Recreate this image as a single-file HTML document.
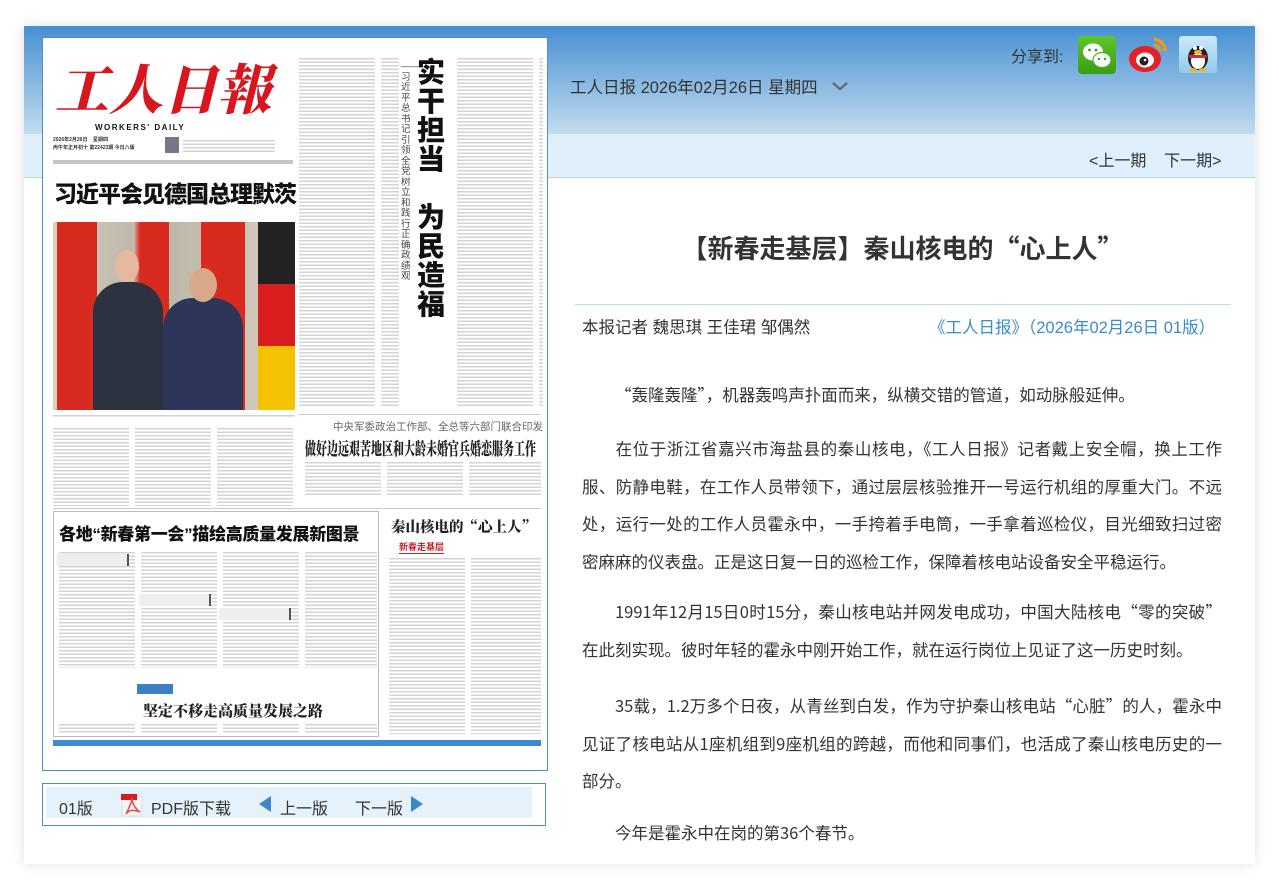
<!DOCTYPE html>
<html><head><meta charset="utf-8">
<style>
*{margin:0;padding:0;box-sizing:border-box}
body{width:1279px;height:888px;background:#fff;font-family:"Liberation Sans","Noto Sans CJK SC",sans-serif;color:#333;position:relative;overflow:hidden}
.abs{position:absolute}
#wrap{left:24px;top:26px;width:1231px;height:838px;background:#fff;box-shadow:0 0 12px rgba(0,0,0,.12)}
#hdr{left:24px;top:26px;width:1231px;height:108px;background:linear-gradient(#4690d2,#c3dcef)}
#band{left:24px;top:134px;width:1231px;height:44px;background:#dff0fc;border-bottom:1px solid #b8d4ea}
.lines{background:repeating-linear-gradient(#fff 0,#fff 2px,#d2d2d2 2px,#d2d2d2 3.5px)}
.cols{background:repeating-linear-gradient(90deg,transparent 0,transparent 76px,#fff 76px,#fff 82px),repeating-linear-gradient(#fff 0,#fff 2px,#d4d4d4 2px,#d4d4d4 3.5px)}
.art{left:582px;width:640px;font-size:16.5px;line-height:20px;color:#333;white-space:nowrap;font-family:"Noto Sans CJK SC","Liberation Sans",sans-serif}
.j{text-align:justify;text-align-last:justify}
.np{overflow:hidden}
</style></head><body>
<div class="abs" id="wrap"></div>
<div class="abs" id="hdr"></div>
<div class="abs" id="band"></div>

<div class="abs" style="left:570px;top:74px;font-size:16.5px;color:#333">工人日报 2026年02月26日 星期四</div>
<svg class="abs" style="left:831px;top:80px" width="18" height="12"><path d="M2 3 L9 9 L16 3" stroke="#666" stroke-width="2.2" fill="none"/></svg>
<div class="abs" style="left:1011px;top:43px;font-size:16px;color:#333">分享到:</div>
<div class="abs" style="left:1078px;top:36px;width:38px;height:38px;background:linear-gradient(#5cc72a,#3a9e12);border-radius:4px"></div>
<svg class="abs" style="left:1078px;top:36px" width="38" height="38"><ellipse cx="15" cy="16" rx="10" ry="8.5" fill="#fff"/><ellipse cx="24" cy="24" rx="9" ry="7.5" fill="#fff" stroke="#4bb31d" stroke-width="1.2"/><circle cx="11.5" cy="14" r="1.4" fill="#3a9e12"/><circle cx="18" cy="14" r="1.4" fill="#3a9e12"/><circle cx="21" cy="23" r="1.2" fill="#3a9e12"/><circle cx="27" cy="23" r="1.2" fill="#3a9e12"/></svg>
<svg class="abs" style="left:1127px;top:33px" width="44" height="42"><ellipse cx="18" cy="26" rx="16" ry="13" fill="#e32227"/><ellipse cx="18" cy="27" rx="9" ry="7.5" fill="#fff"/><circle cx="17" cy="28" r="4.5" fill="#222"/><circle cx="18" cy="27" r="1.3" fill="#fff"/><path d="M27 6 A12 12 0 0 1 38 18" stroke="#f19a1a" stroke-width="3.5" fill="none"/><path d="M27 12 A6 6 0 0 1 33 18" stroke="#f19a1a" stroke-width="3" fill="none"/></svg>
<div class="abs" style="left:1179px;top:36px;width:38px;height:37px;background:linear-gradient(#cde9fb,#8fcaf0);border-radius:3px"></div>
<svg class="abs" style="left:1179px;top:36px" width="38" height="37"><ellipse cx="19" cy="22" rx="10" ry="12" fill="#222"/><ellipse cx="19" cy="25" rx="7" ry="8" fill="#fff"/><circle cx="16" cy="12" r="2" fill="#fff"/><circle cx="22" cy="12" r="2" fill="#fff"/><ellipse cx="19" cy="16" rx="4" ry="2" fill="#f5b41a"/><rect x="10" y="19" width="18" height="3" fill="#e3262b"/><ellipse cx="14" cy="34" rx="4" ry="1.8" fill="#f5b41a"/><ellipse cx="24" cy="34" rx="4" ry="1.8" fill="#f5b41a"/></svg>
<div class="abs" style="left:1089px;top:147px;font-size:16px;color:#333">&lt;上一期&nbsp;&nbsp;&nbsp;&nbsp;下一期&gt;</div>

<div class="abs np" style="left:42px;top:37px;width:506px;height:734px;border:1px solid #4b8fd0;background:#fff">
 <div class="abs" style="left:12px;top:14px;font-family:'Noto Serif CJK SC',serif;font-size:54px;font-weight:900;color:#d8161d;font-style:italic;letter-spacing:0px;line-height:70px;white-space:nowrap">工人日報</div>
 <div class="abs" style="left:52px;top:85px;font-size:8px;font-weight:bold;letter-spacing:1.5px;color:#111;white-space:nowrap">WORKERS' DAILY</div>
 <div class="abs" style="left:10px;top:98px;font-size:5px;color:#333;line-height:8px;font-weight:bold;white-space:nowrap">2026年2月26日 &nbsp;&nbsp;&nbsp;星期四<br>丙午年正月初十 第22423期 今日八版</div>
 <div class="abs" style="left:122px;top:99px;width:14px;height:16px;background:#778"></div>
 <div class="abs lines" style="left:140px;top:100px;width:92px;height:14px"></div>
 <div class="abs" style="left:10px;top:122px;width:240px;height:4px;background:#c4c4c4"></div>
 <div class="abs" style="left:11px;top:142px;font-size:23px;font-weight:900;color:#111;white-space:nowrap;line-height:28px;letter-spacing:-1px">习近平会见德国总理默茨</div>
 <div class="abs" style="left:10px;top:184px;width:242px;height:188px;background:linear-gradient(90deg,#d8d0c0,#b9b3a6 40%,#d7cfbf)">
  <div class="abs" style="left:4px;top:0;width:40px;height:188px;background:#d92a1f"></div>
  <div class="abs" style="left:80px;top:0;width:36px;height:188px;background:linear-gradient(90deg,#d0c8b8,#d92a1f 20%)"></div>
  <div class="abs" style="left:148px;top:0;width:44px;height:188px;background:#d92a1f"></div>
  <div class="abs" style="left:205px;top:0;width:37px;height:188px;background:linear-gradient(#222 33%,#d81e1e 33%,#d81e1e 66%,#f4c200 66%)"></div>
  <div class="abs" style="left:40px;top:60px;width:70px;height:128px;background:#2c3240;border-radius:30px 30px 0 0"></div>
  <div class="abs" style="left:62px;top:28px;width:24px;height:32px;background:#e6b8a0;border-radius:50%"></div>
  <div class="abs" style="left:110px;top:76px;width:80px;height:112px;background:#2d3658;border-radius:30px 30px 0 0"></div>
  <div class="abs" style="left:136px;top:46px;width:28px;height:34px;background:#d8a888;border-radius:50%"></div>
 </div>
 <div class="abs lines" style="left:10px;top:375px;width:242px;height:4px"></div>
 <div class="abs cols" style="left:10px;top:388px;width:242px;height:80px"></div>
 <div class="abs cols" style="left:256px;top:18px;width:100px;height:350px"></div>
 <div class="abs" style="left:358px;top:24px;width:10px;font-size:9.5px;line-height:10.5px;color:#444">——习近平总书记引领全党树立和践行正确政绩观</div>
 <div class="abs" style="left:374px;top:20px;width:30px;font-size:28px;font-weight:900;line-height:29px;color:#111">实干担当<br><br>为民造福</div>
 <div class="abs cols" style="left:414px;top:18px;width:86px;height:350px"></div>
 <div class="abs" style="left:256px;top:376px;width:242px;height:1px;background:#ccc"></div>
 <div class="abs" style="left:290px;top:381px;font-size:10.5px;color:#666;white-space:nowrap">中央军委政治工作部、全总等六部门联合印发《意见》</div>
 <div class="abs" style="left:262px;top:398px;font-size:11px;font-weight:900;color:#222;white-space:nowrap;font-family:'Noto Serif CJK SC',serif;transform:scale(1,1.6);transform-origin:0 0">做好边远艰苦地区和大龄未婚官兵婚恋服务工作</div>
 <div class="abs cols" style="left:262px;top:422px;width:236px;height:36px"></div>
 <div class="abs" style="left:10px;top:470px;width:488px;height:1px;background:#ccc"></div>
 <div class="abs" style="left:10px;top:473px;width:326px;height:226px;border:1px solid #bbb"></div>
 <div class="abs" style="left:16px;top:482px;font-size:17px;font-weight:900;color:#111;white-space:nowrap;letter-spacing:-0.3px">各地“新春第一会”描绘高质量发展新图景</div>
 <div class="abs cols" style="left:16px;top:512px;width:318px;height:118px"></div>
 <div class="abs" style="left:14px;top:516px;width:72px;height:12px;background:#eee;border-right:2px solid #555"></div>
 <div class="abs" style="left:96px;top:556px;width:72px;height:12px;background:#eee;border-right:2px solid #555"></div>
 <div class="abs" style="left:176px;top:570px;width:72px;height:12px;background:#eee;border-right:2px solid #555"></div>
 <div class="abs" style="left:94px;top:646px;width:36px;height:10px;background:#3d7fc4"></div>
 <div class="abs" style="left:100px;top:662px;font-size:15px;font-weight:900;color:#222;white-space:nowrap;font-family:'Noto Serif CJK SC',serif">坚定不移走高质量发展之路</div>
 <div class="abs cols" style="left:16px;top:684px;width:318px;height:12px"></div>
 <div class="abs" style="left:348px;top:478px;font-size:14.5px;font-weight:900;color:#222;white-space:nowrap;font-family:'Noto Serif CJK SC',serif">秦山核电的“心上人”</div>
 <div class="abs" style="left:356px;top:502px;font-size:9px;font-weight:bold;color:#c0282d;border-bottom:1px solid #c0282d">新春走基层</div>
 <div class="abs cols" style="left:346px;top:518px;width:152px;height:178px"></div>
 <div class="abs" style="left:10px;top:702px;width:488px;height:6px;background:#3c8ad4"></div>
</div>

<div class="abs" style="left:42px;top:783px;width:504px;height:43px;border:1px solid #4b8fd0;background:#fff"></div>
<div class="abs" style="left:46px;top:787px;width:486px;height:31px;background:#e6f2fb"></div>
<div class="abs" style="left:59px;top:795px;font-size:16px;color:#333">01版</div>
<svg class="abs" style="left:120px;top:792px" width="24" height="26"><rect x="2" y="2" width="20" height="22" fill="#f4f4f4" stroke="#ddd"/><rect x="1" y="2" width="16" height="6" fill="#d41d1d"/><path d="M6 22 Q12 10 12 6 Q12 14 20 20 Q10 16 6 22" stroke="#e24b4b" stroke-width="1.5" fill="none"/></svg>
<div class="abs" style="left:151px;top:795px;font-size:16px;color:#333">PDF版下载</div>
<svg class="abs" style="left:259px;top:796px" width="14" height="16"><path d="M12 0 L0 8 L12 16Z" fill="#3d86c8"/></svg>
<div class="abs" style="left:280px;top:795px;font-size:16px;color:#333">上一版</div>
<div class="abs" style="left:355px;top:795px;font-size:16px;color:#333">下一版</div>
<svg class="abs" style="left:411px;top:796px" width="14" height="16"><path d="M0 0 L12 8 L0 16Z" fill="#3d86c8"/></svg>

<div class="abs" style="left:575px;top:229px;width:655px;text-align:center;font-size:26px;font-weight:bold;color:#333;font-family:'Noto Sans CJK SC',sans-serif">【新春走基层】秦山核电的“心上人”</div>
<div class="abs" style="left:575px;top:304px;width:656px;height:1px;background:#b9dcf5"></div>
<div class="abs" style="left:582px;top:314px;font-size:16.5px;color:#333">本报记者 魏思琪 王佳珺 邹偶然</div>
<div class="abs" style="left:929px;top:314px;font-size:16.5px;color:#3a8bd1">《工人日报》（2026年02月26日 01版）</div>

<div class="abs art" style="top:384px">&emsp;&emsp;“轰隆轰隆”，机器轰鸣声扑面而来，纵横交错的管道，如动脉般延伸。</div>
<div class="abs art j" style="top:438px">&emsp;&emsp;在位于浙江省嘉兴市海盐县的秦山核电，《工人日报》记者戴上安全帽，换上工作</div>
<div class="abs art j" style="top:476px">服、防静电鞋，在工作人员带领下，通过层层核验推开一号运行机组的厚重大门。不远</div>
<div class="abs art j" style="top:513px">处，运行一处的工作人员霍永中，一手挎着手电筒，一手拿着巡检仪，目光细致扫过密</div>
<div class="abs art" style="top:551px">密麻麻的仪表盘。正是这日复一日的巡检工作，保障着核电站设备安全平稳运行。</div>
<div class="abs art j" style="top:601px">&emsp;&emsp;1991年12月15日0时15分，秦山核电站并网发电成功，中国大陆核电“零的突破”</div>
<div class="abs art" style="top:639px">在此刻实现。彼时年轻的霍永中刚开始工作，就在运行岗位上见证了这一历史时刻。</div>
<div class="abs art j" style="top:695px">&emsp;&emsp;35载，1.2万多个日夜，从青丝到白发，作为守护秦山核电站“心脏”的人，霍永中</div>
<div class="abs art j" style="top:733px">见证了核电站从1座机组到9座机组的跨越，而他和同事们，也活成了秦山核电历史的一</div>
<div class="abs art" style="top:770px">部分。</div>
<div class="abs art" style="top:822px">&emsp;&emsp;今年是霍永中在岗的第36个春节。</div>
</body></html>
